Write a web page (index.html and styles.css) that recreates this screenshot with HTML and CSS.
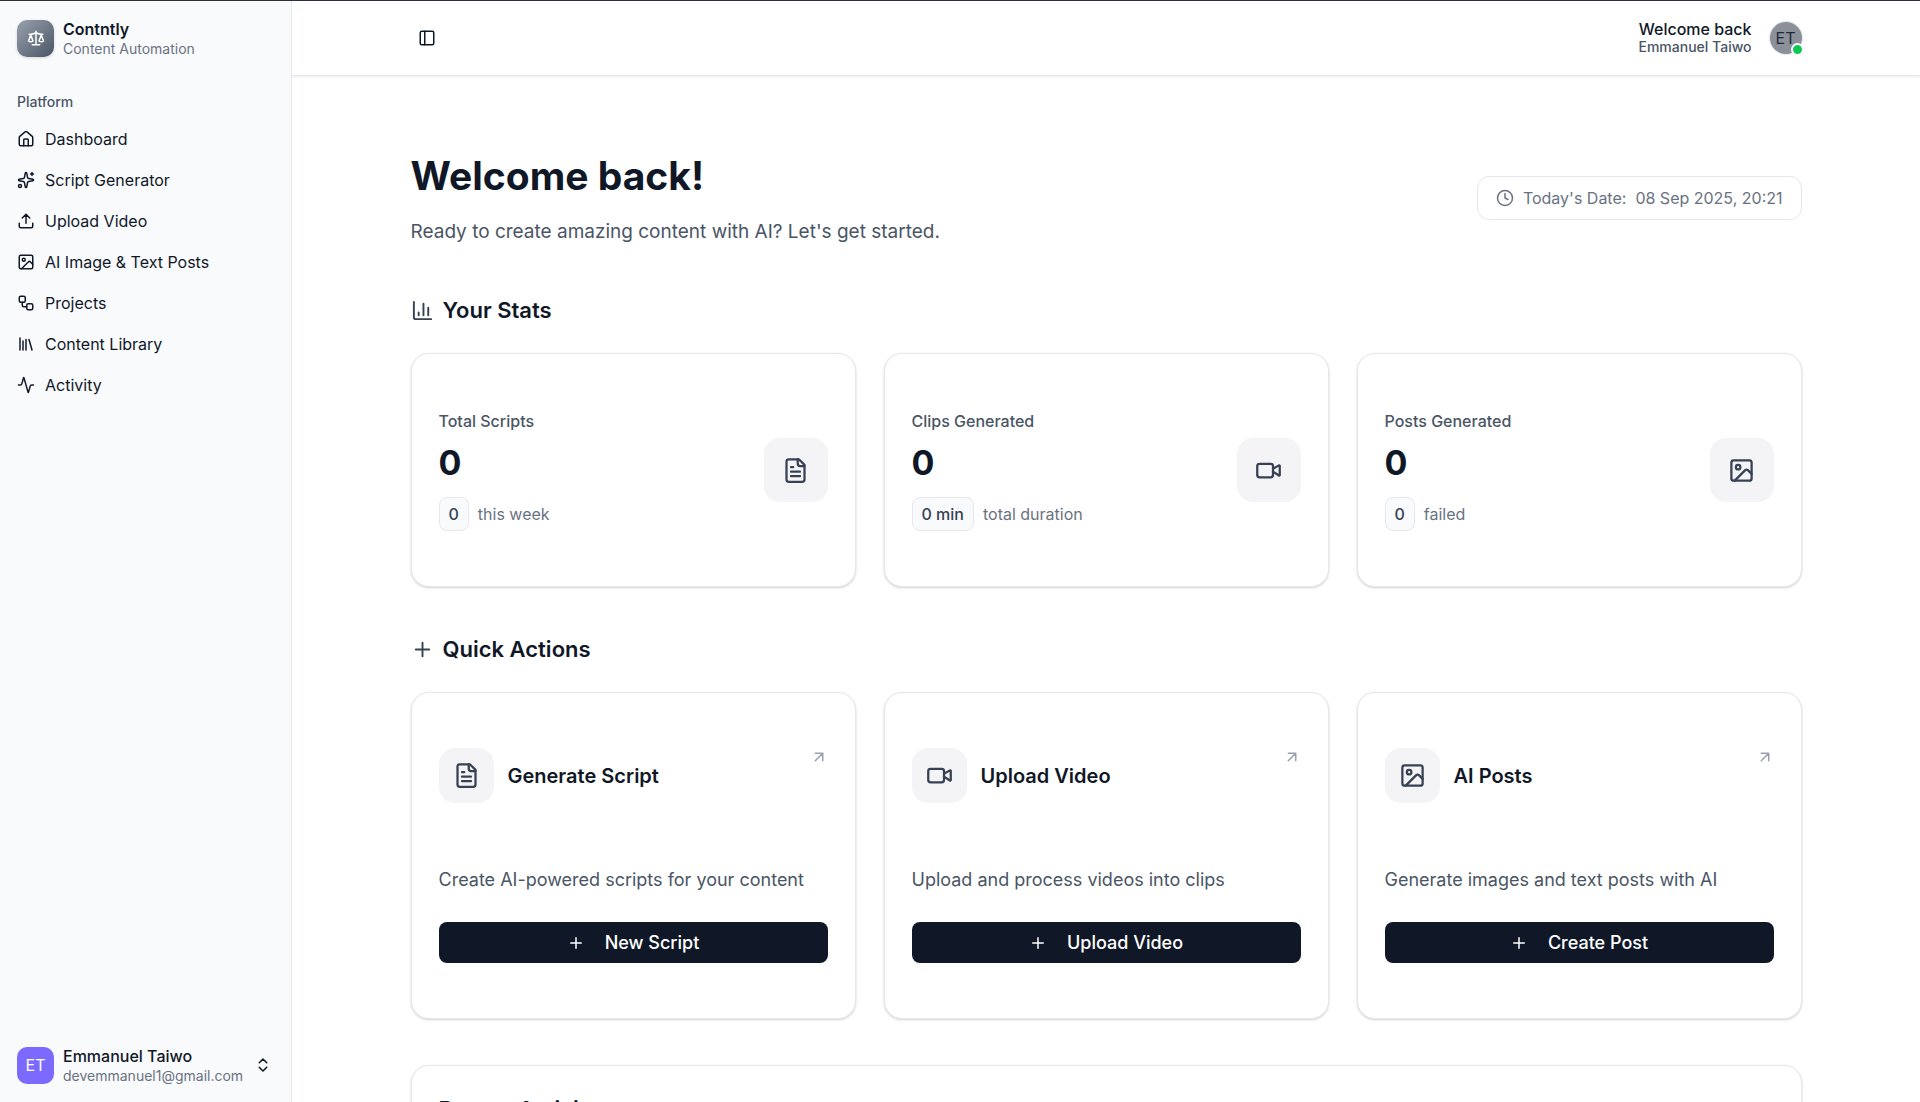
FILE: index.html
```html
<!DOCTYPE html>
<html lang="en">
<head>
<meta charset="utf-8">
<meta name="viewport" content="width=device-width, initial-scale=1">
<title>Contntly – Dashboard</title>
<link rel="stylesheet" href="styles.css">
</head>
<body>
<svg class="sprite" aria-hidden="true">
  <symbol id="scale" viewBox="0 0 24 24"><path d="m16 16 3-8 3 8c-.87.65-1.92 1-3 1s-2.13-.35-3-1ZM2 16l3-8 3 8c-.87.65-1.92 1-3 1s-2.13-.35-3-1ZM7 21h10M12 3v18M3 7h2c2 0 5-1 7-2 2 1 5 2 7 2h2"/></symbol>
  <symbol id="house" viewBox="0 0 24 24"><path d="M15 21v-8a1 1 0 0 0-1-1h-4a1 1 0 0 0-1 1v8"/><path d="M3 10a2 2 0 0 1 .709-1.528l7-5.999a2 2 0 0 1 2.582 0l7 5.999A2 2 0 0 1 21 10v9a2 2 0 0 1-2 2H5a2 2 0 0 1-2-2z"/></symbol>
  <symbol id="sparkles" viewBox="0 0 24 24"><path d="M11.017 2.814a1 1 0 0 1 1.966 0l1.051 5.558a2 2 0 0 0 1.594 1.594l5.558 1.051a1 1 0 0 1 0 1.966l-5.558 1.051a2 2 0 0 0-1.594 1.594l-1.051 5.558a1 1 0 0 1-1.966 0l-1.051-5.558a2 2 0 0 0-1.594-1.594l-5.558-1.051a1 1 0 0 1 0-1.966l5.558-1.051a2 2 0 0 0 1.594-1.594zM20 2v4M22 4h-4"/><circle cx="4" cy="20" r="2"/></symbol>
  <symbol id="upload" viewBox="0 0 24 24"><path d="M12 3v12M17 8l-5-5-5 5M21 15v4a2 2 0 0 1-2 2H5a2 2 0 0 1-2-2v-4"/></symbol>
  <symbol id="image" viewBox="0 0 24 24"><rect x="3" y="3" width="18" height="18" rx="2"/><circle cx="9" cy="9" r="2"/><path d="m21 15-3.086-3.086a2 2 0 0 0-2.828 0L6 21"/></symbol>
  <symbol id="workflow" viewBox="0 0 24 24"><rect x="3" y="3" width="8" height="8" rx="2"/><path d="M7 11v4a2 2 0 0 0 2 2h4"/><rect x="13" y="13" width="8" height="8" rx="2"/></symbol>
  <symbol id="library" viewBox="0 0 24 24"><path d="m16 6 4 14M12 6v14M8 8v12M4 4v16"/></symbol>
  <symbol id="activity" viewBox="0 0 24 24"><path d="M22 12h-2.48a2 2 0 0 0-1.93 1.46l-2.35 8.36a.25.25 0 0 1-.48 0L9.24 2.18a.25.25 0 0 0-.48 0l-2.35 8.36A2 2 0 0 1 4.49 12H2"/></symbol>
  <symbol id="chevrons" viewBox="0 0 24 24"><path d="m7 15 5 5 5-5M7 9l5-5 5 5"/></symbol>
  <symbol id="panel" viewBox="0 0 24 24"><rect x="3" y="3" width="18" height="18" rx="2"/><path d="M9 3v18"/></symbol>
  <symbol id="clock" viewBox="0 0 24 24"><circle cx="12" cy="12" r="10"/><path d="M12 6v6l4 2"/></symbol>
  <symbol id="chart" viewBox="0 0 24 24"><path d="M3 3v16a2 2 0 0 0 2 2h16M18 17V9M13 17V5M8 17v-3"/></symbol>
  <symbol id="plus" viewBox="0 0 24 24"><path d="M5 12h14M12 5v14"/></symbol>
  <symbol id="file" viewBox="0 0 24 24"><path d="M15 2H6a2 2 0 0 0-2 2v16a2 2 0 0 0 2 2h12a2 2 0 0 0 2-2V7Z"/><path d="M14 2v4a2 2 0 0 0 2 2h4M10 9H8M16 13H8M16 17H8"/></symbol>
  <symbol id="video" viewBox="0 0 24 24"><path d="m16 13 5.223 3.482a.5.5 0 0 0 .777-.416V7.87a.5.5 0 0 0-.752-.432L16 10.5"/><rect x="2" y="6" width="14" height="12" rx="2"/></symbol>
  <symbol id="arrow" viewBox="0 0 24 24"><path d="M7 7h10v10M7 17 17 7"/></symbol>
</svg>

<div class="app">
  <aside class="sidebar">
    <a class="profile" href="#">
      <span class="tile tile-brand"><svg class="icon"><use href="#scale"/></svg></span>
      <span class="profile-text"><strong class="brand-name">Contntly</strong><span class="brand-tag">Content Automation</span></span>
    </a>
    <nav class="nav" aria-labelledby="nav-title">
      <h2 class="nav-title" id="nav-title">Platform</h2>
      <ul class="nav-list">
        <li><a class="nav-link" href="#"><svg class="icon"><use href="#house"/></svg>Dashboard</a></li>
        <li><a class="nav-link" href="#"><svg class="icon"><use href="#sparkles"/></svg>Script Generator</a></li>
        <li><a class="nav-link" href="#"><svg class="icon"><use href="#upload"/></svg>Upload Video</a></li>
        <li><a class="nav-link" href="#"><svg class="icon"><use href="#image"/></svg>AI Image &amp; Text Posts</a></li>
        <li><a class="nav-link" href="#"><svg class="icon"><use href="#workflow"/></svg>Projects</a></li>
        <li><a class="nav-link" href="#"><svg class="icon"><use href="#library"/></svg>Content Library</a></li>
        <li><a class="nav-link" href="#"><svg class="icon"><use href="#activity"/></svg>Activity</a></li>
      </ul>
    </nav>
    <button class="profile account" type="button">
      <span class="tile tile-user">ET</span>
      <span class="profile-text"><span class="user-name">Emmanuel Taiwo</span><span class="user-mail">devemmanuel1@gmail.com</span></span>
      <svg class="icon account-caret"><use href="#chevrons"/></svg>
    </button>
  </aside>

  <div class="page">
    <header class="topbar">
      <div class="container topbar-inner">
        <button class="toggle" type="button" aria-label="Toggle sidebar"><svg class="icon"><use href="#panel"/></svg></button>
        <div class="greeting">
          <p class="greeting-text"><span class="greeting-title">Welcome back</span><span class="greeting-name">Emmanuel Taiwo</span></p>
          <span class="avatar">ET<span class="status"></span></span>
        </div>
      </div>
    </header>

    <main class="container content">
      <div class="intro">
        <div>
          <h1 class="title">Welcome back!</h1>
          <p class="lead">Ready to create amazing content with AI? Let's get started.</p>
        </div>
        <p class="date"><svg class="icon"><use href="#clock"/></svg><span>Today's Date:</span><time datetime="2025-09-08T20:21">08 Sep 2025, 20:21</time></p>
      </div>

      <section class="section">
        <h2 class="section-title"><svg class="icon icon-md"><use href="#chart"/></svg>Your Stats</h2>
        <div class="grid">
          <article class="card stat">
            <div>
              <h3 class="stat-label">Total Scripts</h3>
              <p class="stat-value">0</p>
              <p class="stat-note"><span class="badge">0</span>this week</p>
            </div>
            <span class="box box-lg"><svg class="icon icon-lg"><use href="#file"/></svg></span>
          </article>
          <article class="card stat">
            <div>
              <h3 class="stat-label">Clips Generated</h3>
              <p class="stat-value">0</p>
              <p class="stat-note"><span class="badge">0 min</span>total duration</p>
            </div>
            <span class="box box-lg"><svg class="icon icon-lg"><use href="#video"/></svg></span>
          </article>
          <article class="card stat">
            <div>
              <h3 class="stat-label">Posts Generated</h3>
              <p class="stat-value">0</p>
              <p class="stat-note"><span class="badge">0</span>failed</p>
            </div>
            <span class="box box-lg"><svg class="icon icon-lg"><use href="#image"/></svg></span>
          </article>
        </div>
      </section>

      <section class="section">
        <h2 class="section-title"><svg class="icon icon-md"><use href="#plus"/></svg>Quick Actions</h2>
        <div class="grid">
          <article class="card">
            <div class="action-head">
              <span class="box"><svg class="icon icon-lg"><use href="#file"/></svg></span>
              <h3 class="action-title">Generate Script</h3>
              <svg class="icon action-arrow"><use href="#arrow"/></svg>
            </div>
            <p class="action-text">Create AI-powered scripts for your content</p>
            <button class="button" type="button"><svg class="icon"><use href="#plus"/></svg>New Script</button>
          </article>
          <article class="card">
            <div class="action-head">
              <span class="box"><svg class="icon icon-lg"><use href="#video"/></svg></span>
              <h3 class="action-title">Upload Video</h3>
              <svg class="icon action-arrow"><use href="#arrow"/></svg>
            </div>
            <p class="action-text">Upload and process videos into clips</p>
            <button class="button" type="button"><svg class="icon"><use href="#plus"/></svg>Upload Video</button>
          </article>
          <article class="card">
            <div class="action-head">
              <span class="box"><svg class="icon icon-lg"><use href="#image"/></svg></span>
              <h3 class="action-title">AI Posts</h3>
              <svg class="icon action-arrow"><use href="#arrow"/></svg>
            </div>
            <p class="action-text">Generate images and text posts with AI</p>
            <button class="button" type="button"><svg class="icon"><use href="#plus"/></svg>Create Post</button>
          </article>
        </div>
      </section>

      <section class="section card recent">
        <h2 class="recent-title">Recent Activity</h2>
      </section>
    </main>
  </div>
</div>
</body>
</html>
```
FILE: styles.css
```css
:root {
  --ink: #101828;
  --slate: #364153;
  --body: #4a5565;
  --muted: #6a7282;
  --line: #e5e7eb;
  --soft: #f4f4f6;
  --side: #f9fafc;
}

* { box-sizing: border-box; }

body {
  margin: 0;
  background: #fff;
  color: var(--ink);
  font: 16px/24px Inter, "Liberation Sans", sans-serif;
}

h1, h2, h3, p, ul { margin: 0; padding: 0; }
ul { list-style: none; }
a { color: inherit; text-decoration: none; }
button { font: inherit; color: inherit; border: 0; background: none; padding: 0; cursor: pointer; }

.sprite { display: none; }

.icon {
  width: 18px;
  height: 18px;
  flex: none;
  fill: none;
  stroke: currentColor;
  stroke-width: 2;
  stroke-linecap: round;
  stroke-linejoin: round;
}
.icon-md { width: 23px; height: 23px; }
.icon-lg { width: 27px; height: 27px; }

.app {
  display: flex;
  height: 100vh;
  overflow: hidden;
  border-top: 1px solid #2b303b;
}

/* Sidebar */
.sidebar {
  width: 292px;
  flex: none;
  display: flex;
  flex-direction: column;
  padding: 17px;
  background: var(--side);
  border-right: 1px solid var(--line);
}

.profile {
  display: flex;
  align-items: center;
  gap: 9px;
  text-align: left;
}
.profile-text { display: flex; flex-direction: column; flex: 1; }

.tile {
  display: grid;
  place-items: center;
  width: 37px;
  height: 37px;
  border-radius: 10px;
  color: #fff;
}
.tile-brand {
  background: linear-gradient(135deg, #99a1af, #4a5565);
  box-shadow: 0 1px 3px rgb(0 0 0 / 15%);
}
.tile-user { background: #7c6aff; }

.brand-name { font-weight: 600; line-height: 22px; }
.brand-tag, .user-mail { font-size: 14px; line-height: 18px; color: var(--muted); }
.user-name { font-weight: 500; line-height: 22px; }

.nav { flex: 1; padding-top: 26px; }
.nav-title { font-size: 14px; line-height: 36px; font-weight: 500; color: var(--body); }
.nav-list { display: grid; gap: 4px; }
.nav-link { display: flex; align-items: center; gap: 10px; height: 37px; }

.account { width: 100%; }
.account-caret { margin-right: 2px; }

/* Main column */
.page { flex: 1; min-width: 0; overflow: hidden; }

.container {
  width: 100%;
  max-width: 1463px;
  margin: 0 auto;
  padding: 0 36px;
}

.topbar {
  border-bottom: 1px solid var(--line);
  box-shadow: 0 1px 2px rgb(0 0 0 / 8%);
}
.topbar-inner { display: flex; align-items: center; justify-content: space-between; height: 74px; }
.toggle { display: grid; place-items: center; width: 32px; height: 32px; }

.greeting { display: flex; align-items: center; gap: 18px; }
.greeting-text { display: flex; flex-direction: column; text-align: right; }
.greeting-title { font-weight: 500; line-height: 18px; }
.greeting-name { font-size: 14px; line-height: 18px; font-weight: 500; color: var(--body); }

.avatar {
  position: relative;
  display: grid;
  place-items: center;
  width: 32px;
  height: 32px;
  border-radius: 50%;
  background: #8b9099;
  color: #1e2939;
  box-shadow: 0 0 0 1px var(--line);
}
.status {
  position: absolute;
  right: -2px;
  bottom: -2px;
  width: 13px;
  height: 13px;
  border: 2px solid #fff;
  border-radius: 50%;
  background: #0fc854;
}

.content { padding-top: 71px; padding-bottom: 46px; }

.intro { display: flex; align-items: center; justify-content: space-between; }
.title { font-size: 39px; line-height: 58px; font-weight: 700; }
.lead { margin-top: 11px; font-size: 19px; line-height: 32px; color: var(--body); }
.date {
  display: flex;
  align-items: center;
  gap: 9px;
  padding: 8px 18px;
  border: 1px solid var(--line);
  border-radius: 12px;
  line-height: 26px;
  color: var(--muted);
}

.section { margin-top: 46px; }
.section-title {
  display: flex;
  align-items: center;
  gap: 9px;
  margin-bottom: 27px;
  font-size: 22px;
  line-height: 32px;
  font-weight: 600;
}
.section-title .icon { color: var(--slate); }

.grid { display: grid; grid-template-columns: repeat(3, 1fr); gap: 28px; }

.card {
  padding: 55px 27px;
  border: 1px solid var(--line);
  border-radius: 18px;
  background: #fff;
  box-shadow: 0 1px 3px rgb(0 0 0 / 10%), 0 1px 2px rgb(0 0 0 / 8%);
}

.stat { display: flex; align-items: center; justify-content: space-between; }
.stat-label { font-size: 16px; line-height: 24px; font-weight: 500; color: var(--body); }
.stat-value { margin-top: 9px; font-size: 34px; line-height: 41px; font-weight: 700; }
.stat-note { display: flex; align-items: center; gap: 9px; margin-top: 14px; color: var(--muted); }
.badge {
  padding: 4px 9px;
  border: 1px solid var(--line);
  border-radius: 8px;
  background: var(--side);
  color: var(--slate);
  font-weight: 500;
}

.box {
  display: grid;
  place-items: center;
  width: 55px;
  height: 55px;
  border-radius: 16px;
  background: var(--soft);
  color: var(--slate);
}
.box-lg { width: 64px; height: 64px; }

.action-head { display: flex; align-items: center; gap: 14px; }
.action-title { flex: 1; font-size: 20px; line-height: 28px; font-weight: 600; }
.action-arrow { align-self: flex-start; color: #99a1af; }
.action-text { margin: 62px 0 27px; font-size: 18px; line-height: 30px; color: var(--body); }
.button {
  display: flex;
  align-items: center;
  justify-content: center;
  gap: 20px;
  width: 100%;
  height: 41px;
  border-radius: 8px;
  background: var(--ink);
  color: #fff;
  font-size: 18px;
  font-weight: 500;
}

.recent { padding-top: 27px; }
.recent-title { font-size: 22px; line-height: 32px; font-weight: 600; }
```
